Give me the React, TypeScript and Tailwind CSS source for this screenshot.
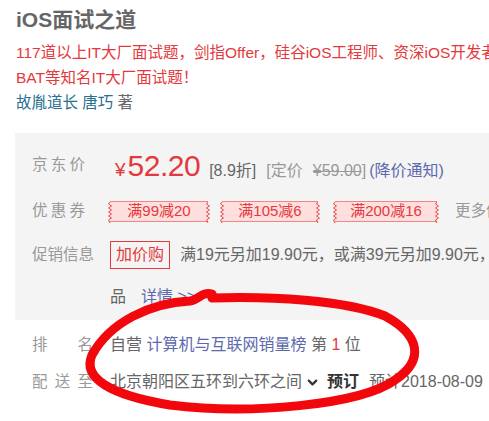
import { ChevronDown } from 'lucide-react';

const font = 'font-["Liberation_Sans","Noto_Sans_CJK_SC",sans-serif]';

function Label({ chars, w }: { chars: string[]; w: string }) {
  return (
    <div className={`flex justify-between text-[15.5px] text-[#999] ${w}`}>
      {chars.map((c, i) => (
        <span key={i}>{c}</span>
      ))}
    </div>
  );
}

function Zigzag({ side }: { side: 'l' | 'r' }) {
  return (
    <svg
      width="4"
      height="21"
      viewBox="0 0 4 21"
      className={`absolute top-0 ${side === 'l' ? '-left-[2px]' : '-right-[2px]'}`}
    >
      <path d="M2 0 L0.5 2 L3.5 4 L0.5 6 L3.5 8 L0.5 10 L3.5 12 L0.5 14 L3.5 16 L0.5 18 L2 21" fill="none" stroke="#e4393c" strokeWidth="0.9" />
    </svg>
  );
}

function Coupon({ text, w }: { text: string; w: string }) {
  return (
    <div className={`relative h-[21px] ${w} bg-[#ffdede] border-y border-[#e88] flex items-center justify-center text-[15px] text-[#e4393c]`}>
      <Zigzag side="l" />
      {text}
      <Zigzag side="r" />
    </div>
  );
}

export default function App() {
  return (
    <div className={`relative w-[489px] h-[421px] overflow-hidden bg-white ${font}`}>
      {/* 书名和简介 */}
      <div className="pl-4 pt-[6px]">
        <h1 className="text-[21px] leading-[28px] font-bold text-[#666]">iOS面试之道</h1>
        <div className="mt-[6px] text-[15.5px] leading-[25px] text-[#e4393c] whitespace-nowrap">
          117道以上IT大厂面试题，剑指Offer，硅谷iOS工程师、资深iOS开发者
        </div>
        <div className="text-[15.5px] leading-[25px] text-[#e4393c] whitespace-nowrap">BAT等知名IT大厂面试题！</div>
        <div className="text-[15.5px] leading-[25px] whitespace-nowrap">
          <span className="text-[#2a6f8f]">故胤道长 唐巧</span>
          <span className="text-[#666]"> 著</span>
        </div>
      </div>

      {/* 价格区域 */}
      <div className="mt-[18px] ml-[15px] w-[520px] bg-[#f4f4f4] pl-[17px] pt-[12px] pb-[11px]">
        <div className="flex items-center h-[40px]">
          <Label chars={['京', '东', '价']} w="w-[53px]" />
          <div className="ml-[25px] flex items-baseline whitespace-nowrap text-[16px]">
            <span className="ml-[5px] text-[19px] text-[#e4393c]">¥</span>
            <span className="ml-[2px] text-[30px] text-[#e4393c] tracking-[-0.5px]">52.20</span>
            <span className="ml-[9px] text-[#666]">[8.9折]</span>
            <span className="ml-[10px] text-[#999]">
              [定价<span className="ml-[10px] line-through">¥59.00</span>]
            </span>
            <span className="ml-[3px] text-[#5e69ad]">(降价通知)</span>
          </div>
        </div>

        <div className="flex items-center h-[26px] mt-[13px]">
          <Label chars={['优', '惠', '券']} w="w-[53px]" />
          <div className="ml-[25px] flex items-center gap-[14px]">
            <Coupon text="满99减20" w="w-[98px]" />
            <Coupon text="满105减6" w="w-[96px]" />
            <div className="ml-[3px]">
              <Coupon text="满200减16" w="w-[102px]" />
            </div>
            <span className="ml-[4px] text-[15.5px] text-[#999] whitespace-nowrap">更多优惠券</span>
          </div>
        </div>

        <div className="flex items-center h-[28px] mt-[17px]">
          <Label chars={['促', '销', '信', '息']} w="w-[62px]" />
          <div className="ml-[16px] flex items-center whitespace-nowrap">
            <span className="h-[28px] px-[5px] flex items-center border border-[#e4393c] text-[16px] text-[#e4393c]">加价购</span>
            <span className="ml-[10px] text-[16px] text-[#666]">满19元另加19.90元，或满39元另加9.90元，即可换购热销商</span>
          </div>
        </div>

        <div className="flex items-center h-[24px] mt-[16px]">
          <div className="ml-[78px] text-[16px] text-[#666] whitespace-nowrap">
            品<span className="ml-[15px] text-[#5e69ad]">详情 &gt;&gt;</span>
          </div>
        </div>
      </div>

      {/* 排名、配送 */}
      <div className="pl-[32px]">
        <div className="flex items-center h-[24px] mt-[13px]">
          <Label chars={['排', '名']} w="w-[61px]" />
          <div className="ml-[17px] text-[16px] whitespace-nowrap text-[#666]">
            自营 <span className="text-[#5e69ad]">计算机与互联网销量榜</span> 第 <span className="text-[#e4393c]">1</span> 位
          </div>
        </div>
        <div className="flex items-center h-[24px] mt-[13px]">
          <Label chars={['配', '送', '至']} w="w-[61px]" />
          <div className="ml-[17px] flex items-center text-[16px] whitespace-nowrap text-[#666]">
            北京朝阳区五环到六环之间
            <ChevronDown className="ml-[3px] w-[15px] h-[15px] text-[#333]" strokeWidth={3.5} />
            <span className="ml-[7px] font-bold text-[#333]">预订</span>
            <span className="ml-[10px]">预计2018-08-09</span>
          </div>
        </div>
      </div>

      {/* 红色圈注 */}
      <svg className="absolute inset-0 pointer-events-none" width="489" height="421" viewBox="0 0 489 421">
        <path
          d="M212 294 C202 291 199 300 190 301 C150 303 110 322 92 355 C82 378 110 395 170 405 C250 415 360 405 395 380 C425 360 420 335 385 316 C345 300 270 296 212 298"
          fill="none"
          stroke="#f2080c"
          strokeWidth="9"
          strokeLinecap="round"
          strokeLinejoin="round"
        />
      </svg>
    </div>
  );
}
